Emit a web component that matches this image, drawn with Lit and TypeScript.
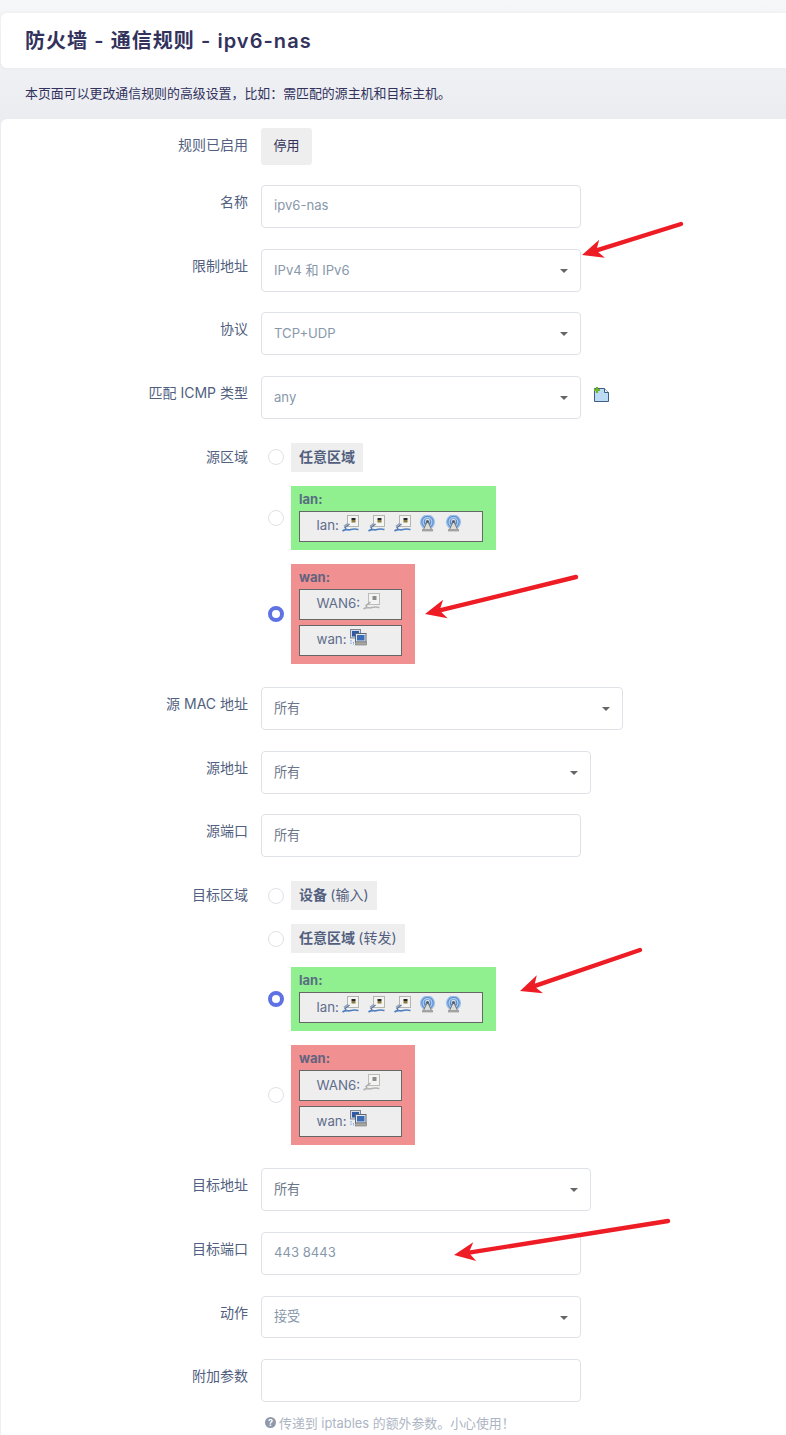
import { LitElement, html, css, svg } from "lit";
import { customElement } from "lit/decorators.js";

const eth = () => html`<svg class="ic" width="17" height="17" viewBox="0 0 17 17">
  <rect x="5.5" y="0.5" width="11" height="11" fill="#f4f4f0" stroke="#b4b4b0"/>
  <rect x="9.5" y="3" width="4" height="2" fill="#26262a"/><rect x="9.5" y="5" width="4" height="2.5" fill="#8a7a40"/>
  <path d="M7.5 9 L3 12.5 L4 14" fill="none" stroke="#56749f" stroke-width="1.3"/>
  <path d="M2 11.5 L6 8.5" stroke="#9aa6b8" stroke-width="1.6"/>
  <path d="M0.5 16 C4 13.5 6 15.5 9 14.5 S13 14 16.5 14.5" fill="none" stroke="#4f7fc0" stroke-width="1.7"/>
</svg>`;
const eth6 = () => html`<svg class="ic" width="17" height="17" viewBox="0 0 17 17">
  <rect x="5.5" y="0.5" width="11" height="11" fill="#f4f4f2" stroke="#bcbcbc"/>
  <rect x="9.5" y="3" width="4" height="4" fill="#8c8c8c"/>
  <path d="M7.5 9 L3 12.5 L4 14" fill="none" stroke="#a8a8a8" stroke-width="1.3"/>
  <path d="M0.5 16 C4 13.5 6 15.5 9 14.5 S13 14 16.5 14.5" fill="none" stroke="#b4b4b4" stroke-width="1.7"/>
</svg>`;
const wifi = () => html`<svg class="ic" width="17" height="17" viewBox="0 0 17 17">
  <circle cx="8.5" cy="7" r="7.6" fill="#9dc0ea"/><circle cx="8.5" cy="7" r="6.2" fill="#5b8fd0"/>
  <circle cx="8.5" cy="7" r="5" fill="#b8d2ee"/><circle cx="8.5" cy="7" r="3.8" fill="#5b8fd0"/>
  <circle cx="8.5" cy="6.2" r="2.4" fill="#d8e4f0"/>
  <path d="M8.5 6 L4.5 14.5 H12.5 Z" fill="#dcdcd8" stroke="#7a7a7a" stroke-width="1"/>
  <circle cx="8.5" cy="6.5" r="1.6" fill="#555f6c"/>
  <rect x="3" y="14" width="11" height="2.4" fill="#a2a2a2"/>
</svg>`;
const net = () => html`<svg class="ic" width="17" height="17" viewBox="0 0 17 17">
  <rect x="0.5" y="0.5" width="10" height="8.5" fill="#d4dbe6" stroke="#7d8794"/>
  <rect x="2" y="2" width="7" height="5.5" fill="#2d5aa8"/>
  <rect x="5.5" y="4.5" width="10.5" height="8.5" fill="#e4e8ee" stroke="#5c6670"/>
  <rect x="7" y="6" width="7.5" height="5.5" fill="#3a6cb8"/>
  <rect x="5.5" y="13" width="11" height="3" fill="#a9a9a2" stroke="#777" stroke-width=".6"/>
  <path d="M1 11v5M3.5 13v3" stroke="#6f9fe0" stroke-width="1" stroke-dasharray="1.5 1"/>
</svg>`;
const arrow = (x1: number, y1: number, x2: number, y2: number) => {
  const a = Math.atan2(y2 - y1, x2 - x1);
  const deg = (a * 180) / Math.PI;
  return svg`<line x1=${x1} y1=${y1} x2=${x2 - 12 * Math.cos(a)} y2=${y2 - 12 * Math.sin(a)} stroke="#ee1c25" stroke-width="4.4" stroke-linecap="round"/>
  <polygon transform="translate(${x2} ${y2}) rotate(${deg})" points="0,0 -21,-9.5 -15,0 -21,9.5" fill="#ee1c25"/>`;
};

@customElement("app-root")
export class AppRoot extends LitElement {
  static styles = css`
    :host { display: block; position: relative; height: 1435px; overflow: hidden;
      background: linear-gradient(#f6f7f8, #eaecf0 119px, #eef0f5);
      font-family: Inter, "Noto Sans CJK SC", sans-serif; color: #32325d; font-size: 14px; }
    .title { margin: 13px 0 0 1px; height: 55px; box-sizing: border-box; padding: 0 0 2px 24px; background: #fff; border-radius: 6px 0 0 6px;
      display: flex; align-items: center; font-size: 20px; font-weight: 600; letter-spacing: 1.05px; box-shadow: 0 0 4px rgba(50,50,93,.05); }
    .desc { height: 51px; box-sizing: border-box; padding: 0 0 3px 25px; display: flex; align-items: center; font-size: 12.92px; color: #32325d; }
    .card { margin-left: 1px; background: #fff; border-radius: 6px 0 0 0; padding-top: 9px; height: 1320px; box-sizing: border-box; }
    .row { display: flex; padding-bottom: 20.85px; }
    .row.first { padding-bottom: 20px; }
    .label { width: 247px; flex: none; text-align: right; padding-top: 9px; line-height: 17px; color: #525f7f; }
    .row.first .label { padding-top: 8px; }
    .zlabel .label { padding-top: 8px; }
    .sel .label, .inp .label { padding-top: 8px; }
    .field { margin-left: 13px; }
    .btn { width: 51px; height: 37px; padding-bottom: 4px; box-sizing: border-box; background: #eeeeee; border-radius: 3px; display: flex; align-items: center; justify-content: center; font-size: 13px; color: #32325d; }
    .ctl { box-sizing: border-box; height: 42.9px; width: 320px; border: 1px solid #dee2e6; border-radius: 4px; background: #fff;
      display: flex; align-items: center; padding: 0 12px 2px; color: #8898aa; font-size: 13.1px; position: relative; }
    .ctl.dark { color: #6b7689; }
    .ctl.w362 { width: 362px; } .ctl.w330 { width: 330px; }
    .caret { position: absolute; right: 12px; top: 19px; width: 0; height: 0; border: 4px solid transparent; border-top: 4.5px solid #666; border-bottom: 0; }
    .withadd { display: flex; align-items: center; }
    .add { margin-left: 12px; margin-top: -7px; }
    .zones { display: flex; flex-direction: column; gap: 14px; margin-top: 3px; margin-bottom: 2.17px; }
    .zones.z2 { margin-bottom: 2.1px; }
    .zone { display: flex; align-items: center; }
    .radio { box-sizing: border-box; width: 16px; height: 16px; border-radius: 50%; border: 1px solid #dee2e6; background: #fff; margin: 0 7px; flex: none; }
    .radio.on { border: 4px solid #5e72e4; }
    .tag { background: #eeeeee; height: 29px; box-sizing: border-box; padding: 0 8px 3px; display: flex; align-items: center; font-size: 14px; font-weight: 700; color: #525f7f; white-space: pre; }
    .tag span { font-weight: 400; }
    .nw { padding: 5px 13px 8px 8px; font-size: 13px; font-weight: 700; color: #525f7f; }
    .nw.lan { background: #90f090; width: 205px; height: 64px; box-sizing: border-box; padding-right: 13px; }
    .nw.wan { background: #f09090; width: 124px; height: 100px; box-sizing: border-box; }
    .nw > .head { line-height: 16px; height: 20px; opacity: .9; }
    .dev { box-sizing: border-box; border: 1px solid #666; background: #eeeeee; height: 31px; font-weight: 400; display: flex; align-items: center; padding: 0 0 2px 16.5px; font-size: 13.3px; color: #5f6d8c; margin-bottom: 5px; white-space: pre; }
    .dev:last-child { margin-bottom: 0; }
    .ic { flex: none; display: block; margin-top: -4px; }
    .devs { display: flex; gap: 8.7px; margin-left: 3.5px; }
    .dev .one { margin-left: 3px; }
    .hint { font-size: 12.9px; color: #adb5c4; margin: -10px 0 0 264px; display: flex; align-items: center; gap: 3px; }
    .overlay { position: absolute; left: 0; top: 0; pointer-events: none; }
  `;

  private lan() {
    return html`<div class="nw lan"><div class="head">lan:</div>
      <div class="dev">lan:<div class="devs">${eth()}${eth()}${eth()}${wifi()}${wifi()}</div></div></div>`;
  }
  private wan() {
    return html`<div class="nw wan"><div class="head">wan:</div>
      <div class="dev">WAN6:<span class="one">${eth6()}</span></div>
      <div class="dev">wan:<span class="one">${net()}</span></div></div>`;
  }
  private sel(label: string, value: string, cls = "") {
    return html`<div class="row sel"><div class="label">${label}</div><div class="field">
      <div class="ctl ${cls}">${value}<i class="caret"></i></div></div></div>`;
  }
  private inp(label: string, value: string, cls = "") {
    return html`<div class="row inp"><div class="label">${label}</div><div class="field">
      <div class="ctl ${cls}">${value}</div></div></div>`;
  }

  render() {
    return html`
      <div class="title">防火墙 - 通信规则 - ipv6-nas</div>
      <div class="desc">本页面可以更改通信规则的高级设置，比如：需匹配的源主机和目标主机。</div>
      <div class="card">
        <div class="row first"><div class="label">规则已启用</div><div class="field"><div class="btn">停用</div></div></div>
        ${this.inp("名称", "ipv6-nas")}
        ${this.sel("限制地址", "IPv4 和 IPv6")}
        ${this.sel("协议", "TCP+UDP")}
        <div class="row sel"><div class="label">匹配 ICMP 类型</div><div class="field withadd">
          <div class="ctl">any<i class="caret"></i></div>
          <svg class="add" width="17" height="17" viewBox="0 0 17 17">
            <path d="M1.5 2.5H11.5L15.5 6.5V15.5H1.5Z" fill="#bcdcf6" stroke="#3f5f80"/>
            <path d="M11.5 2.5V6.5H15.5" fill="#e8f3fc" stroke="#3f5f80"/>
            <path d="M1 4h6M4 1v6" stroke="#6db52c" stroke-width="2.2"/>
          </svg></div></div>
        <div class="row zlabel"><div class="label">源区域</div><div class="field zones">
          <div class="zone"><i class="radio"></i><div class="tag">任意区域</div></div>
          <div class="zone"><i class="radio"></i>${this.lan()}</div>
          <div class="zone"><i class="radio on"></i>${this.wan()}</div>
        </div></div>
        ${this.sel("源 MAC 地址", "所有", "dark w362")}
        ${this.sel("源地址", "所有", "dark w330")}
        ${this.inp("源端口", "所有", "dark")}
        <div class="row zlabel"><div class="label">目标区域</div><div class="field zones z2">
          <div class="zone"><i class="radio"></i><div class="tag">设备 <span>(输入)</span></div></div>
          <div class="zone"><i class="radio"></i><div class="tag">任意区域 <span>(转发)</span></div></div>
          <div class="zone"><i class="radio on"></i>${this.lan()}</div>
          <div class="zone"><i class="radio"></i>${this.wan()}</div>
        </div></div>
        ${this.sel("目标地址", "所有", "dark w330")}
        ${this.inp("目标端口", "443 8443")}
        ${this.sel("动作", "接受")}
        ${this.inp("附加参数", "")}
        <div class="hint">
          <svg width="11" height="11" viewBox="0 0 11 11"><circle cx="5.5" cy="5.5" r="5.5" fill="#8f99ab"/><text x="5.5" y="8.7" font-size="9" font-weight="700" text-anchor="middle" fill="#fff" font-family="Inter">?</text></svg>
          传递到 iptables 的额外参数。小心使用！</div>
      </div>
      <svg class="overlay" width="786" height="1435">
        ${arrow(681, 224, 582, 255)}
        ${arrow(576, 577, 425, 614)}
        ${arrow(640, 950, 520, 991)}
        ${arrow(668, 1221, 454, 1255)}
      </svg>
    `;
  }
}
